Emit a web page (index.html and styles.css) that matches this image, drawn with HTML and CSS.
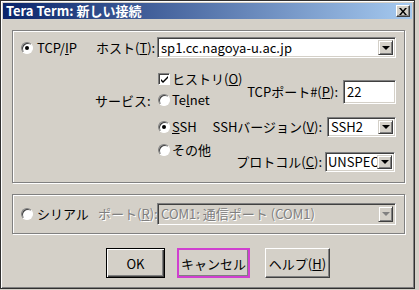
FILE: index.html
```html
<!DOCTYPE html>
<html>
<head>
<meta charset="utf-8">
<link rel="stylesheet" href="styles.css">
</head>
<body>
<div class="window">
  <div class="titlebar">
    <span class="title">Tera Term: 新しい接続</span>
    <span class="close"><svg width="8" height="7" viewBox="0 0 8 7"><path d="M0 0h2l2 2.5L6 0h2L5 3.5 8 7H6L4 4.5 2 7H0l3-3.5z" fill="#000"/></svg></span>
  </div>
  <div class="content">
    <div class="group g1">
      <div class="row-host">
        <div class="opt tcp"><span class="radio on"></span><span class="txt">TCP/<u>I</u>P</span></div>
        <span class="lbl host-lbl">ホスト(<u>T</u>):</span>
        <div class="combo host-combo"><span class="val">sp1.cc.nagoya-u.ac.jp</span><span class="drop"><i></i></span></div>
      </div>
      <div class="row-service">
        <span class="lbl service-lbl">サービス:</span>
        <div class="choices">
          <div class="choice hist"><span class="check"><svg width="9" height="9" viewBox="0 0 9 9"><path d="M1 4l2 2 5-5v2L3 8 1 6z" fill="#000"/></svg></span><span class="txt">ヒストリ(<u>O</u>)</span></div>
          <div class="choice telnet"><span class="radio"></span><span class="txt">Te<u>l</u>net</span></div>
          <div class="choice ssh"><span class="radio on"></span><span class="txt"><u>S</u>SH</span></div>
          <div class="choice other"><span class="radio"></span><span class="txt">その他</span></div>
        </div>
        <div class="settings">
          <div class="setting port"><span class="lbl">TCPポート#(<u>P</u>):</span><div class="edit"><span class="val">22</span></div></div>
          <div class="setting ver"><span class="lbl">SSHバージョン(<u>V</u>):</span><div class="combo ver-combo"><span class="val">SSH2</span><span class="drop"><i></i></span></div></div>
          <div class="setting proto"><span class="lbl">プロトコル(<u>C</u>):</span><div class="combo proto-combo"><span class="val">UNSPEC</span><span class="drop"><i></i></span></div></div>
        </div>
      </div>
    </div>
    <div class="group g2">
      <div class="row-serial">
        <div class="opt serial"><span class="radio"></span><span class="txt">シリアル</span></div>
        <span class="lbl port-lbl disabled">ポート(<u>R</u>):</span>
        <div class="combo com-combo dis"><span class="val disabled">COM1: 通信ポート (COM1)</span><span class="drop"><i></i></span></div>
      </div>
    </div>
    <div class="buttons">
      <button class="btn ok">OK</button>
      <button class="btn cancel">キャンセル</button>
      <button class="btn help">ヘルプ(<u>H</u>)</button>
    </div>
  </div>
</div>
</body>
</html>
```
FILE: styles.css
```css
* { box-sizing: border-box; }
body {
  margin: 0;
  background: #d4d0c8;
  font-family: "Noto Sans CJK JP", "Noto Sans", sans-serif;
  font-size: 13px;
  line-height: 16px;
  color: #000;
}
u { text-decoration: underline; text-underline-offset: 1px; }
.window {
  width: 415px;
  height: 289px;
  border: 1px solid #303030;
  box-shadow: inset 1px 1px 0 #fff, inset -1px -1px 0 #808080;
  padding: 2px;
}
.titlebar {
  height: 16px;
  display: flex;
  align-items: center;
  justify-content: space-between;
  background: linear-gradient(to right, #0a246a, #a6caf0);
  padding: 0 2px 0 3px;
}
.title {
  color: #fff;
  font-weight: bold;
  font-size: 13px;
  line-height: 16px;
}
.close {
  width: 14px;
  height: 12px;
  background: #d4d0c8;
  border: 1px solid;
  border-color: #fff #404040 #404040 #fff;
  box-shadow: inset -1px -1px 0 #808080;
  display: flex;
  align-items: center;
  justify-content: center;
}
.content { padding: 11px 0 0 9px; }
.lbl, .txt { white-space: nowrap; flex: none; }
.group {
  width: 393px;
  border: 1px solid #808080;
  box-shadow: inset 1px 1px 0 #fff, 1px 1px 0 #fff;
}
.g1 { height: 153px; }
.g2 { height: 40px; margin-top: 11px; }
.row-host {
  display: flex;
  align-items: center;
  height: 21px;
  margin-top: 6px;
  padding-left: 8px;
}
.opt { display: flex; align-items: center; flex: none; }
.tcp { width: 75px; }
.opt .txt { margin-left: 4px; }
.host-lbl { width: 61px; }
.combo, .edit {
  flex: none;
  height: 21px;
  background: #fff;
  border: 1px solid;
  border-color: #808080 #fff #fff #808080;
  box-shadow: inset 1px 1px 0 #404040, inset -1px -1px 0 #d4d0c8;
  display: flex;
  align-items: center;
  padding: 2px 2px 2px 3px;
}
.combo .val, .edit .val { flex: 1; white-space: nowrap; min-width: 0; }
.drop {
  position: relative;
  width: 15px;
  height: 100%;
  background: #d4d0c8;
  border: 1px solid;
  border-color: #d4d0c8 #404040 #404040 #d4d0c8;
  box-shadow: inset 1px 1px 0 #fff, inset -1px -1px 0 #808080;
  display: flex;
  align-items: center;
  justify-content: center;
  flex: none;
}
.drop i {
  width: 0; height: 0;
  border-left: 4px solid transparent;
  border-right: 4px solid transparent;
  border-top: 4px solid #000;
}
.dis .drop i { border-top-color: #808080; }
.host-combo { width: 239px; }
.radio {
  width: 12px;
  height: 12px;
  flex: none;
  border-radius: 50%;
  background: #fff;
  border: 1px solid;
  border-color: #808080 #fff #fff #808080;
  box-shadow: inset 1px 1px 0 #404040;
  position: relative;
}
.radio.on::after {
  content: "";
  position: absolute;
  left: 3px;
  top: 3px;
  width: 4px;
  height: 4px;
  border-radius: 50%;
  background: #000;
}
.check {
  width: 12px;
  height: 12px;
  flex: none;
  background: #fff;
  border: 1px solid;
  border-color: #808080 #fff #fff #808080;
  box-shadow: inset 1px 1px 0 #404040;
  display: flex;
  align-items: center;
  justify-content: center;
  padding-left: 1px;
  padding-top: 1px;
}
.row-service {
  display: flex;
  padding-left: 82px;
  padding-right: 8px;
}
.service-lbl { width: 63px; padding-top: 35px; }
.choices { width: 50px; flex: none; padding-top: 13px; }
.choice { display: flex; align-items: center; height: 16px; white-space: nowrap; }
.choice .txt { margin-left: 2px; }
.telnet { margin-top: 5px; }
.ssh { margin-top: 11px; }
.other { margin-top: 7px; }
.settings { flex: 1; display: flex; flex-direction: column; align-items: flex-end; }
.setting { display: flex; align-items: center; white-space: nowrap; }
.setting .lbl { margin-right: 5px; }
.port { margin-top: 22px; height: 24px; }
.edit { width: 53px; height: 24px; }
.ver { margin-top: 13px; height: 20px; }
.ver-combo { width: 69px; height: 20px; }
.proto { margin-top: 15px; height: 20px; margin-right: 1px; }
.proto .lbl { margin-right: 3px; }
.proto-combo { width: 70px; height: 20px; padding-left: 2px; }
.row-serial {
  display: flex;
  align-items: center;
  height: 22px;
  margin-top: 8px;
  padding-left: 8px;
}
.serial { width: 77px; }
.port-lbl { width: 59px; }
.disabled { color: #808080; text-shadow: 1px 1px 0 #fff; }
.com-combo { width: 239px; height: 22px; background: #d4d0c8; }
.buttons {
  display: flex;
  margin-top: 14px;
  height: 30px;
  padding-left: 94px;
}
.btn {
  font-family: inherit;
  font-size: 13px;
  height: 30px;
  background: #d4d0c8;
  border: 1px solid;
  border-color: #fff #404040 #404040 #fff;
  box-shadow: inset -1px -1px 0 #808080;
  padding: 0;
  color: #000;
}
.ok {
  width: 59px;
  border: 1px solid #000;
  box-shadow: inset 1px 1px 0 #fff, inset -1px -1px 0 #404040, inset -2px -2px 0 #808080;
}
.cancel {
  width: 73px;
  margin-left: 12px;
  border: 2px solid #d040d0;
  box-shadow: inset -1px -1px 0 #808080;
}
.help { width: 65px; margin-left: 15px; }
```
